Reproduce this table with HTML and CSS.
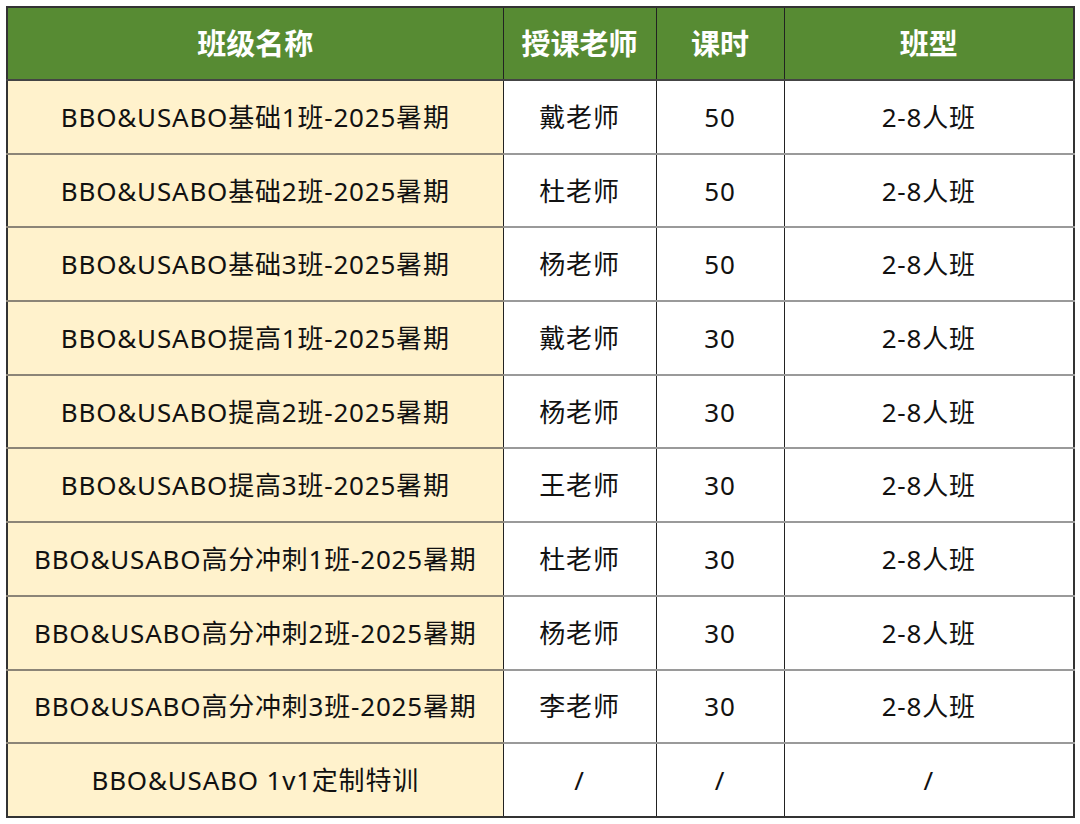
FILE: index.html
```html
<!DOCTYPE html>
<html lang="zh-CN">
<head>
<meta charset="utf-8">
<title>BBO&amp;USABO 课程表</title>
<link rel="stylesheet" href="styles.css">
</head>
<body>
<div class="wrap">
<table class="grid">
<colgroup>
<col class="c1"><col class="c2"><col class="c3"><col class="c4">
</colgroup>
<thead>
<tr><th>班级名称</th><th>授课老师</th><th>课时</th><th>班型</th></tr>
</thead>
<tbody>
<tr><td class="name">BBO&amp;USABO基础1班-2025暑期</td><td>戴老师</td><td>50</td><td>2-8人班</td></tr>
<tr><td class="name">BBO&amp;USABO基础2班-2025暑期</td><td>杜老师</td><td>50</td><td>2-8人班</td></tr>
<tr><td class="name">BBO&amp;USABO基础3班-2025暑期</td><td>杨老师</td><td>50</td><td>2-8人班</td></tr>
<tr><td class="name">BBO&amp;USABO提高1班-2025暑期</td><td>戴老师</td><td>30</td><td>2-8人班</td></tr>
<tr><td class="name">BBO&amp;USABO提高2班-2025暑期</td><td>杨老师</td><td>30</td><td>2-8人班</td></tr>
<tr><td class="name">BBO&amp;USABO提高3班-2025暑期</td><td>王老师</td><td>30</td><td>2-8人班</td></tr>
<tr><td class="name">BBO&amp;USABO高分冲刺1班-2025暑期</td><td>杜老师</td><td>30</td><td>2-8人班</td></tr>
<tr><td class="name">BBO&amp;USABO高分冲刺2班-2025暑期</td><td>杨老师</td><td>30</td><td>2-8人班</td></tr>
<tr><td class="name">BBO&amp;USABO高分冲刺3班-2025暑期</td><td>李老师</td><td>30</td><td>2-8人班</td></tr>
<tr class="last"><td class="name">BBO&amp;USABO 1v1定制特训</td><td>/</td><td>/</td><td>/</td></tr>
</tbody>
</table>
</div>
</body>
</html>
```
FILE: styles.css
```css
html, body {
  margin: 0;
  padding: 0;
  background: #ffffff;
}
.wrap {
  padding: 6px 0 0 6px;
}
.grid {
  border-collapse: collapse;
  table-layout: fixed;
  width: 1067px;
  font-family: "Noto Sans", "Noto Sans CJK SC", sans-serif;
  color: #111111;
  border: 2px solid #333333;
}
.c1 { width: 496px; }
.c2 { width: 153px; }
.c3 { width: 128px; }
.c4 { width: 290px; }
.grid th {
  background: #578b33;
  color: #ffffff;
  font-weight: 700;
  font-size: 29px;
  line-height: 32px;
  height: 71px;
  padding: 0;
  text-align: center;
  border-left: 1.5px solid #222222;
  border-right: 1.5px solid #222222;
  border-bottom: 2px solid #444444;
}
.grid td {
  font-size: 26px;
  line-height: 30px;
  height: 71.7px;
  padding: 0;
  text-align: center;
  letter-spacing: 0.8px;
  border-left: 1.5px solid #222222;
  border-right: 1.5px solid #222222;
  border-bottom: 2px solid #9a9a9a;
  background: #ffffff;
}
.grid td.name {
  background: #fff2cc;
  border-bottom-color: #8c8577;
}
.grid tr.last td {
  border-top: 1.5px solid #444444;
  border-bottom: 2px solid #333333;
}
```
